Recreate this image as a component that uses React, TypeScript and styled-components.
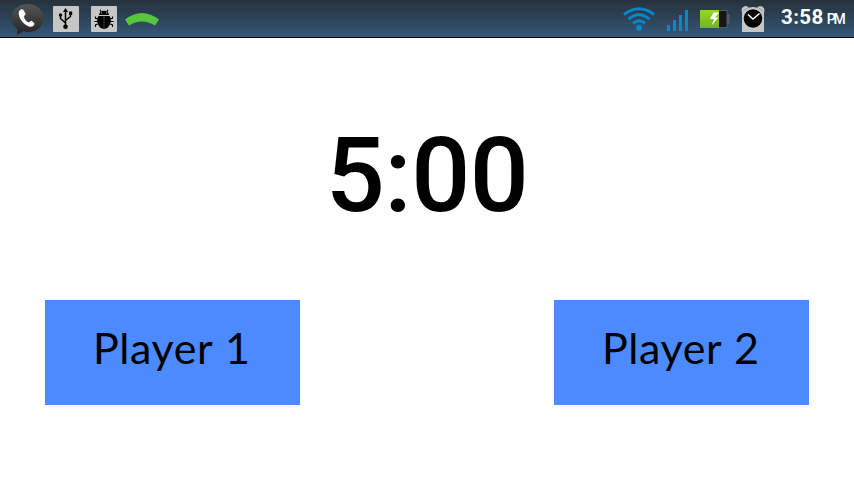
import React from "react";
import styled, { createGlobalStyle } from "styled-components";

const GlobalStyle = createGlobalStyle`
  * { box-sizing: border-box; }
  body { margin: 0; background: #fff; overflow: hidden; }
`;

const Screen = styled.div`
  width: 854px;
  height: 480px;
  display: flex;
  flex-direction: column;
  background: #fff;
  color: #000;
`;

const StatusBar = styled.header`
  height: 38px;
  flex: none;
  display: flex;
  justify-content: space-between;
  background: linear-gradient(#26323c 0, #2b4052 40%, #34587a 100%);
  border-bottom: 1px solid #000;
`;

const IconGroup = styled.div<{ $start?: number }>`
  display: flex;
  padding-left: ${(p) => p.$start ?? 0}px;
`;

const StatusIcon = styled.svg<{ $gap?: number }>`
  display: block;
  flex: none;
  height: 37px;
  margin-right: ${(p) => p.$gap ?? 0}px;
`;

const Clock = styled.time`
  width: 73px;
  padding: 5px 0 0 0;
  display: flex;
  align-items: baseline;
  color: #fff;
  font: 700 20.5px/24px Roboto, sans-serif;
  letter-spacing: 0.4px;
  white-space: nowrap;
`;

const Meridiem = styled.span`
  margin-left: 3px;
  font-size: 14px;
  font-weight: 500;
  letter-spacing: -2px;
`;

const Main = styled.main`
  flex: 1;
  display: flex;
  flex-direction: column;
`;

const Timer = styled.div`
  height: 262px;
  padding-top: 85px;
  text-align: center;
  font: 500 104px/105px Roboto, sans-serif;
  letter-spacing: -0.5px;
`;

const Players = styled.div`
  display: flex;
  justify-content: space-between;
  padding: 0 45px;
`;

const PlayerButton = styled.button`
  width: 255px;
  height: 105px;
  padding: 0 0 9px 48px;
  border: 0;
  background: #4c8bff;
  color: #000;
  text-align: left;
  font: 400 43px/50px Lato, sans-serif;
  letter-spacing: 0.6px;
  word-spacing: 1px;
  white-space: nowrap;
`;

function PhoneIcon() {
  return (
    <StatusIcon width="34" viewBox="10 0 34 37" $gap={9}>
      <defs>
        <linearGradient id="bubble" x2="0" y2="1">
          <stop stopColor="#555" />
          <stop offset="1" stopColor="#242424" />
        </linearGradient>
      </defs>
      <path d="M27.5 4C18.500 4 11.500 10 11.500 18C11.500 23 14 27 17.500 29L17 35L23.500 31.300Q25.500 32 28 32C37 32 43.500 26 43.500 18S36.500 4 27.500 4Z" fill="url(#bubble)" />
      <path d="M19.500 10.500C21 9 22.500 8.800 23.500 10L25.500 13.500Q26 14.800 24 16C24 19 26 21.500 29 22.500Q30.500 20.300 31.800 21L34.200 23Q35 24.200 33.500 25.700C31 28 26.500 26.300 23 22.500C19.500 18.500 17.500 13.500 19.500 10.500Z" fill="#fff" />
    </StatusIcon>
  );
}

function UsbIcon() {
  return (
    <StatusIcon width="27" viewBox="53 0 27 37" $gap={11}>
      <rect x="53" y="6" width="26" height="26" rx="1" fill="#c6c6c6" />
      <path d="M65.500 11V27M65.500 23L60.500 18.500V15M65.500 20.500L70.500 16.500V13" fill="none" stroke="#000" strokeWidth="1.500" />
      <path d="M65.500 8L68 12H63Z" />
      <circle cx="65.500" cy="26.700" r="2.300" />
      <circle cx="60.500" cy="15" r="1.700" />
      <path d="M69 11.500H72.200V15H69Z" />
    </StatusIcon>
  );
}

function BugIcon() {
  return (
    <StatusIcon width="26" viewBox="91 0 26 37" $gap={8}>
      <rect x="91" y="6" width="26" height="26" rx="1" fill="#c6c6c6" />
      <path d="M99 15Q99.500 11 104 10.800Q108.500 11 109 15Z" />
      <path d="M98.500 16H109.500Q111.200 18 110.800 21Q110 28 104 29Q98 28 97.200 21Q96.800 18 98.500 16Z" />
      <path d="M101.200 12L100 9.800M106.800 12L108 9.800M98 19L95.500 18.300V16.500M98 21.500H94.300M98 24L95.500 24.700V27M110 19L112.500 18.300V16.500M110 21.500H113.700M110 24L112.500 24.700V27" fill="none" stroke="#000" strokeWidth="1.100" />
      <path d="M104 16V28" stroke="#555" strokeWidth="0.800" />
      <path d="M101 13H102M106 13H107" stroke="#aaa" />
    </StatusIcon>
  );
}

function CallIcon() {
  return (
    <StatusIcon width="35" viewBox="125 0 35 37">
      <path d="M125 19.500Q142 6.500 159 19.500L155 25.500Q142 17.500 129 25.500Z" fill="#57c63c" />
    </StatusIcon>
  );
}

function WifiIcon() {
  return (
    <StatusIcon width="34" viewBox="622 0 34 37" $gap={11}>
      <g fill="none" stroke="#0987cb" strokeWidth="3">
        <path d="M624 14.600Q639 3 654 14.600" />
        <path d="M628.500 19.100Q639 10.500 649.500 19.100" />
        <path d="M633 23.300Q639 18.300 645 23.300" />
      </g>
      <circle cx="639" cy="27.700" r="3" fill="#0987cb" />
    </StatusIcon>
  );
}

function SignalIcon() {
  return (
    <StatusIcon width="22" viewBox="667 0 22 37" $gap={11}>
      <path d="M667 25H670V31H667ZM673 20H676V31H673ZM679 15H682V31H679ZM685 10H688V31H685Z" fill="#0987cb" />
    </StatusIcon>
  );
}

function BatteryIcon() {
  return (
    <StatusIcon width="30" viewBox="700 0 30 37" $gap={11}>
      <defs>
        <linearGradient id="charge" x2="0" y2="1">
          <stop stopColor="#99d629" />
          <stop offset="1" stopColor="#70b51d" />
        </linearGradient>
      </defs>
      <path d="M719 10H727.500V14H729.500V24H727.500V28H719Z" fill="#555b60" />
      <rect x="719" y="11" width="7.500" height="16" fill="#151515" />
      <rect x="700" y="10" width="19" height="18" fill="url(#charge)" />
      <path d="M713.500 12.500L710 19H714L711.500 25.500L718.500 17.500H715L719 12.500Z" fill="#fff" />
    </StatusIcon>
  );
}

function AlarmIcon() {
  return (
    <StatusIcon width="25" viewBox="741 0 25 37" $gap={15}>
      <path d="M742 32V13L741.500 9.500Q742.500 6 746.500 6L749 7.800Q753 6.300 757 7.800L759.500 6Q763.500 6 764.500 9.500L764 13V32Z" fill="#c6c6c6" />
      <path d="M743.500 11L747.500 7.800M762.500 11L758.500 7.800" stroke="#777" strokeWidth="0.600" />
      <circle cx="753" cy="18.500" r="9.300" />
      <path d="M748 14.500L753 19L759.500 13.500" fill="none" stroke="#fff" strokeWidth="1.600" />
    </StatusIcon>
  );
}

export default function App() {
  return (
    <>
      <GlobalStyle />
      <Screen>
        <StatusBar>
          <IconGroup $start={10}>
            <PhoneIcon />
            <UsbIcon />
            <BugIcon />
            <CallIcon />
          </IconGroup>
          <IconGroup>
            <WifiIcon />
            <SignalIcon />
            <BatteryIcon />
            <AlarmIcon />
            <Clock>3:58<Meridiem>PM</Meridiem></Clock>
          </IconGroup>
        </StatusBar>
        <Main>
          <Timer>5:00</Timer>
          <Players>
            <PlayerButton>Player 1</PlayerButton>
            <PlayerButton>Player 2</PlayerButton>
          </Players>
        </Main>
      </Screen>
    </>
  );
}
